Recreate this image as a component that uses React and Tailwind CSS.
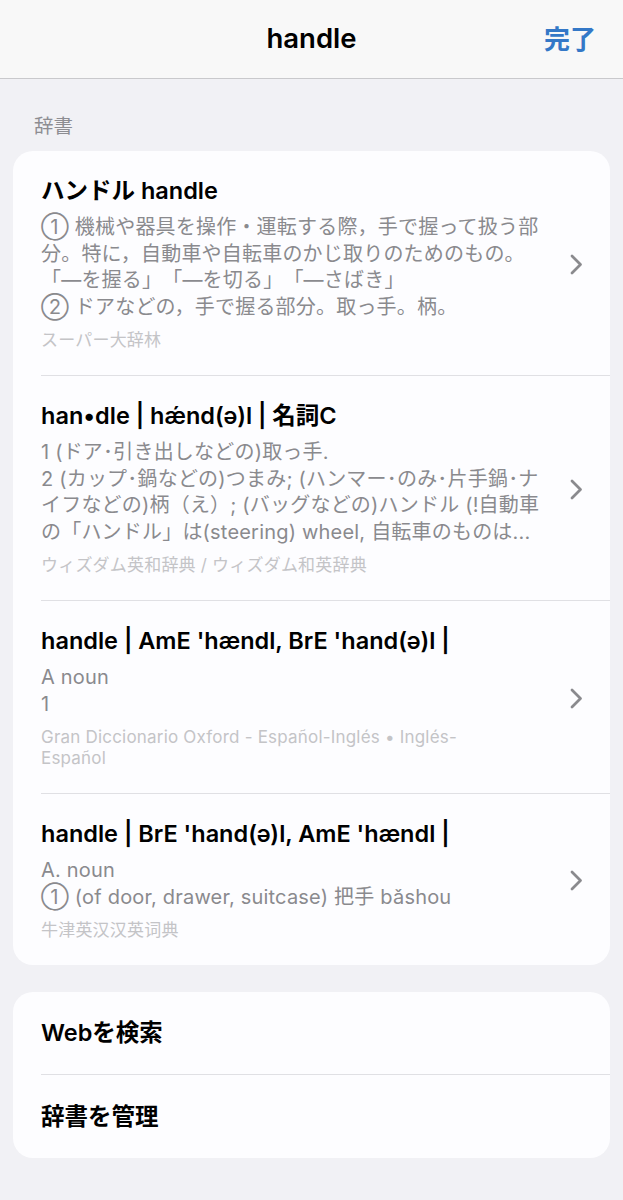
import React from "react";

const entries = [
  {
    title: "ハンドル handle",
    lines: [
      "① 機械や器具を操作・運転する際，手で握って扱う部",
      "分。特に，自動車や自転車のかじ取りのためのもの。",
      "「―を握る」「―を切る」「―さばき」",
      "② ドアなどの，手で握る部分。取っ手。柄。",
    ],
    source: ["スーパー大辞林"],
  },
  {
    title: "han•dle | hǽnd(ə)l | 名詞C",
    lines: [
      "1 (ドア･引き出しなどの)取っ手.",
      "2 (カップ･鍋などの)つまみ; (ハンマー･のみ･片手鍋･ナ",
      "イフなどの)柄（え）; (バッグなどの)ハンドル (!自動車",
      "の「ハンドル」は(steering) wheel, 自転車のものは...",
    ],
    source: ["ウィズダム英和辞典 / ウィズダム和英辞典"],
  },
  {
    title: "handle | AmE 'hændl, BrE 'hand(ə)l |",
    lines: ["A noun", "1"],
    source: ["Gran Diccionario Oxford - Español-Inglés • Inglés-", "Español"],
  },
  {
    title: "handle | BrE 'hand(ə)l, AmE 'hændl |",
    lines: ["A. noun", "① (of door, drawer, suitcase) 把手 bǎshou"],
    source: ["牛津英汉汉英词典"],
  },
];

const Chevron = () => (
  <svg width="13" height="21" viewBox="0 0 13 21" fill="none" className="shrink-0">
    <path
      d="M2 2 L10.5 10.5 L2 19"
      stroke="#8a8a8e"
      strokeWidth="2.8"
      strokeLinecap="round"
      strokeLinejoin="round"
    />
  </svg>
);

const Entry = ({ entry, last }) => (
  <div className="pl-[28px]">
    <div
      className={`flex items-center pr-[27px] pt-[26px] pb-[24px] ${
        last ? "" : "border-b border-[#e0e0e4]"
      }`}
    >
      <div className="flex-1 min-w-0">
        <div className="text-[23.5px] leading-[28px] font-semibold text-black whitespace-nowrap">
          {entry.title}
        </div>
        <div className="mt-[9px] text-[20px] leading-[26.5px] text-[#8a8a8e] tracking-[0.2px]">
          {entry.lines.map((l, i) => (
            <div key={i} className="whitespace-nowrap">
              {l}
            </div>
          ))}
        </div>
        <div className="mt-[10px] text-[17px] leading-[21px] text-[#c4c4c7] tracking-[0.2px]">
          {entry.source.map((s, i) => (
            <div key={i}>{s}</div>
          ))}
        </div>
      </div>
      <Chevron />
    </div>
  </div>
);

export default function App() {
  return (
    <div
      className="min-h-[1200px] bg-[#f1f1f5] text-black [text-spacing-trim:space-all]"
      style={{ fontFamily: '"Inter", "Noto Sans CJK JP", sans-serif' }}
    >
      {/* nav bar */}
      <header className="h-[79px] bg-[#f8f8f8] border-b border-[#c9c9cc] flex items-center justify-center relative">
        <span className="text-[27.5px] font-semibold">handle</span>
        <span className="absolute right-[27px] top-[24px] text-[26px] leading-[32px] font-semibold text-[#3478c7]">
          完了
        </span>
      </header>

      <div className="px-[13px]">
        <div className="pl-[21px] pt-[36px] pb-[14px] text-[19.5px] leading-[22px] text-[#8d8d92]">
          辞書
        </div>

        <div className="bg-[#fdfdff] rounded-[20px] overflow-hidden">
          {entries.map((e, i) => (
            <Entry key={i} entry={e} last={i === entries.length - 1} />
          ))}
        </div>

        <div className="mt-[27px] bg-[#fdfdff] rounded-[20px] pl-[28px] overflow-hidden">
          <div className="h-[83px] flex items-center border-b border-[#e0e0e4] text-[23.5px] font-semibold">
            Webを検索
          </div>
          <div className="h-[83px] flex items-center text-[23.5px] font-semibold">
            辞書を管理
          </div>
        </div>
      </div>
    </div>
  );
}
